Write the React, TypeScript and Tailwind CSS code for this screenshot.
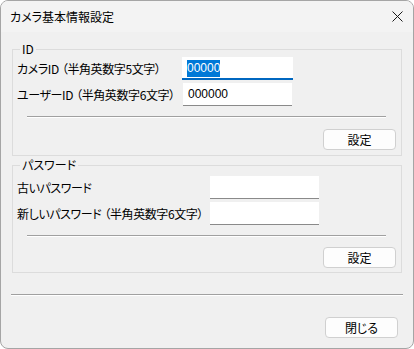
import React from "react";

const font = { fontFamily: '"Noto Sans CJK JP", "Noto Sans", sans-serif' };

function Etched({ className }: { className: string }) {
	return (
		<div className={className}>
			<div className="h-px bg-[#a0a0a0]" />
			<div className="h-px bg-white" />
		</div>
	);
}

function Button({ label }: { label: string }) {
	return (
		<button className="w-[73px] h-[21px] rounded-[4px] border border-[#d0d0d0] bg-[#fdfdfd] text-[12px] leading-none text-black">
			{label}
		</button>
	);
}

function Field({ value, focused, width }: { value?: string; focused?: boolean; width: string }) {
	return (
		<div
			className={
				"h-[23px] bg-white flex items-center px-[5px] text-[12px] shrink-0 " +
				width +
				(focused ? " border-b-2 border-[#0067c0] pt-[1px]" : " border-b border-[#8a8a8a]")
			}
			style={{ fontFamily: '"Liberation Sans", sans-serif' }}
		>
			{value &&
				(focused ? (
					<span className="bg-[#0078d7] text-white leading-[17px]">{value}</span>
				) : (
					<span className="leading-[17px]">{value}</span>
				))}
		</div>
	);
}

// label with a note in full-width brackets, e.g. カメラID（半角英数字5文字）
function Label({ text, note, width }: { text: string; note?: string; width: string }) {
	return (
		<span className={"text-[12px] tracking-[-0.4px] whitespace-nowrap shrink-0 " + width}>
			{text}
			{note && (
				<>
					<span className="ml-[3px]">（</span>
					{note}
					<span>）</span>
				</>
			)}
		</span>
	);
}

function Group({ title, children, className }: { title: string; children: React.ReactNode; className: string }) {
	return (
		<div className={"relative border border-[#dcdcdc] mx-[11px] shrink-0 " + className}>
			<span className="absolute -top-[9px] left-[7px] px-[2px] bg-[#f0f0f0] text-[12px] leading-[16px]">
				{title}
			</span>
			{children}
		</div>
	);
}

export default function App() {
	return (
		<div
			className="w-[414px] h-[349px] bg-[#f0f0f0] border border-[#a5a5a5] rounded-[8px] overflow-hidden flex flex-col text-black [font-feature-settings:'palt']"
			style={font}
		>
			<div className="h-[31px] bg-[#f3f3f3] flex items-center justify-between pl-[9px] pr-[10px] shrink-0">
				<span className="text-[12px]">カメラ基本情報設定</span>
				<svg width="11" height="11" viewBox="0 0 11 11" fill="none" stroke="#1a1a1a" strokeWidth="1">
					<path d="M0.5 0.5L10.5 10.5M10.5 0.5L0.5 10.5" />
				</svg>
			</div>

			<Group title="ID" className="mt-[17px] h-[107px]">
				<div className="pl-[4px] pt-[7px] flex flex-col gap-[3px]">
					<div className="flex items-center">
						<Label text="カメラID" note="半角英数字5文字" width="w-[165px]" />
						<Field value="00000" focused width="w-[111px]" />
					</div>
					<div className="flex items-center">
						<Label text="ユーザーID" note="半角英数字6文字" width="w-[166px]" />
						<Field value="000000" width="w-[109px]" />
					</div>
				</div>
				<Etched className="mt-[10px] ml-[14px] mr-[15px]" />
				<div className="flex justify-end mt-[11px] mr-[5px]">
					<Button label="設定" />
				</div>
			</Group>

			<Group title="パスワード" className="mt-[9px] h-[108px]">
				<div className="pl-[4px] pt-[10px] flex flex-col gap-[3px]">
					<div className="flex items-center">
						<Label text="古いパスワード" width="w-[193px]" />
						<Field width="w-[109px]" />
					</div>
					<div className="flex items-center">
						<Label text="新しいパスワード" note="半角英数字6文字" width="w-[193px]" />
						<Field width="w-[109px]" />
					</div>
				</div>
				<Etched className="mt-[10px] ml-[14px] mr-[15px]" />
				<div className="flex justify-end mt-[10px] mr-[5px]">
					<Button label="設定" />
				</div>
			</Group>

			<Etched className="mt-[21px] mx-[10px]" />
			<div className="flex justify-end mt-[21px] mr-[15px]">
				<Button label="閉じる" />
			</div>
		</div>
	);
}
